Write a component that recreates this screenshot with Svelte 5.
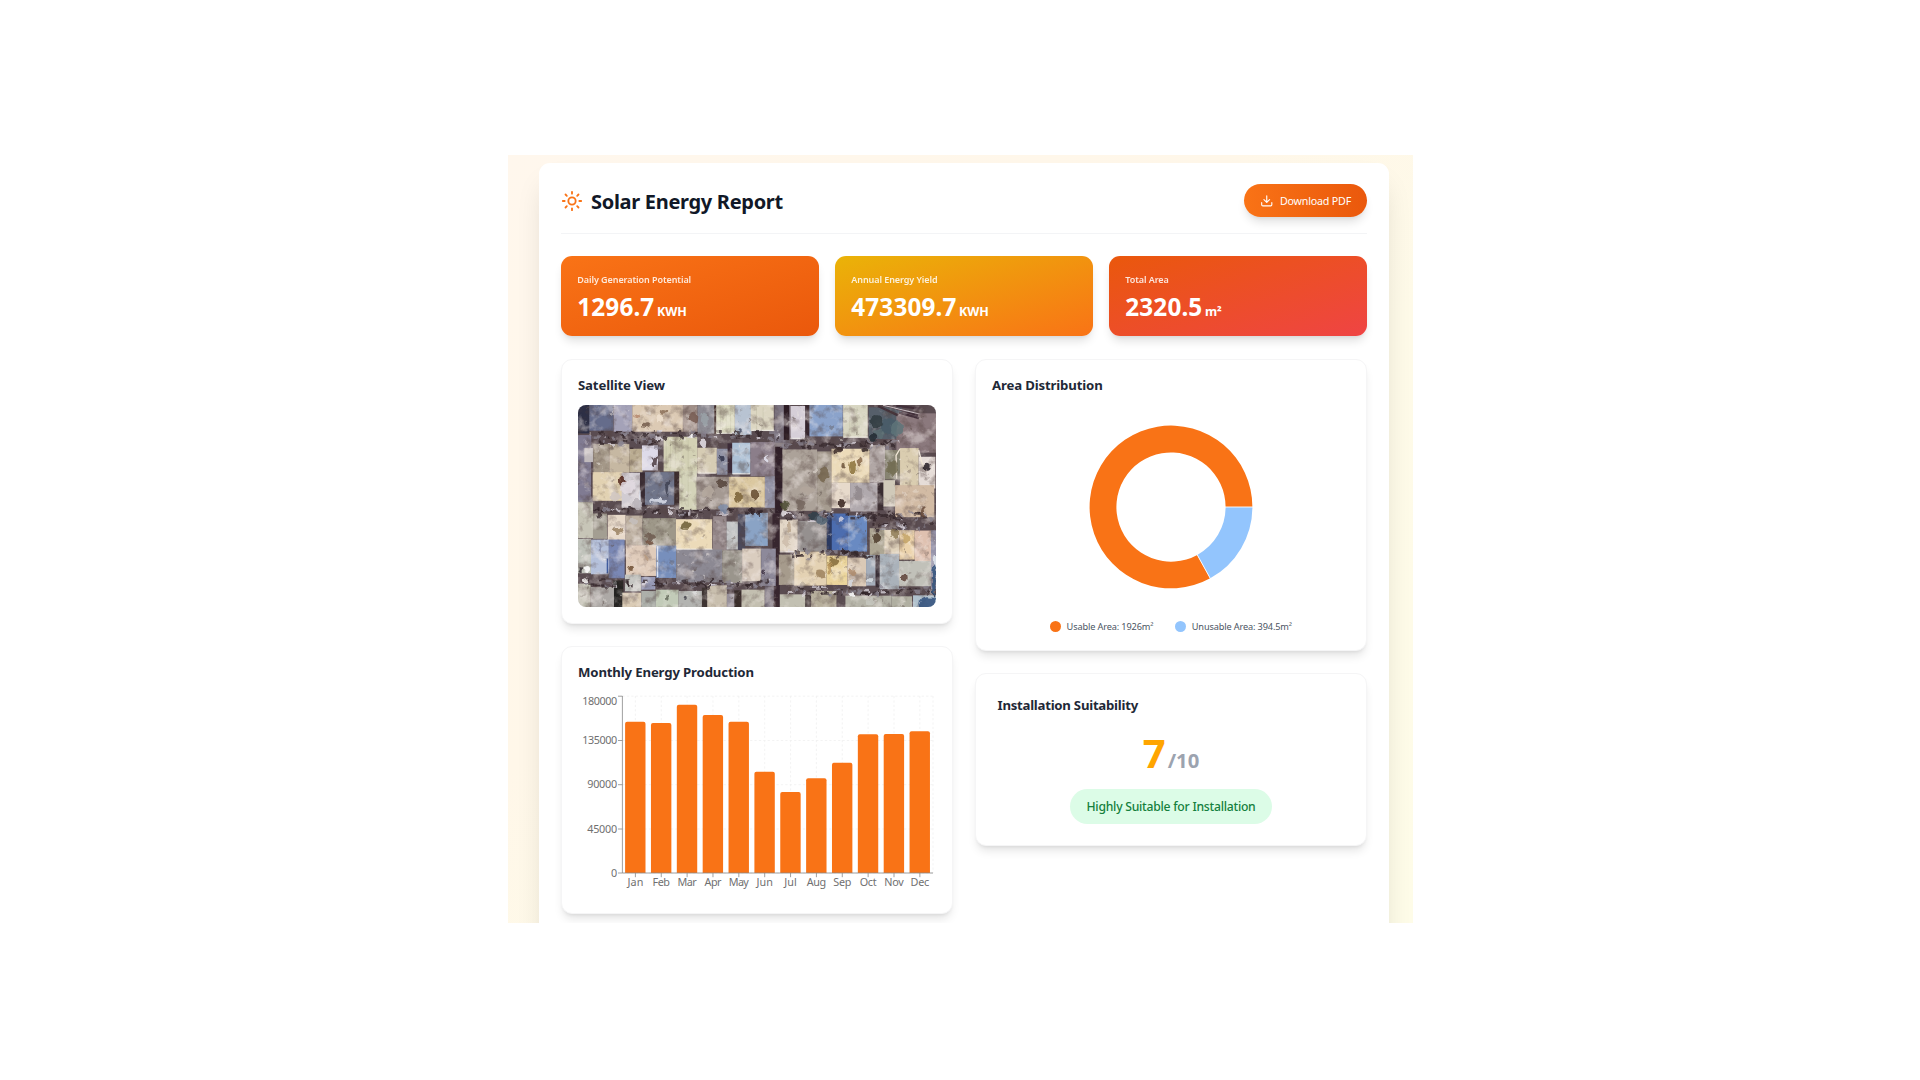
<script>
  const stats = [
    { label: 'Daily Generation Potential', value: '1296.7', unit: 'KWH', tone: 'daily' },
    { label: 'Annual Energy Yield', value: '473309.7', unit: 'KWH', tone: 'annual' },
    { label: 'Total Area', value: '2320.5', unit: 'm²', tone: 'area' }
  ];

  const months = [
    ['Jan', 151.3, 16], ['Feb', 150, 17.5], ['Mar', 168.3, 19], ['Apr', 158, 17],
    ['May', 151.3, 20], ['Jun', 101.3, 16.5], ['Jul', 81, 12.5], ['Aug', 94.7, 19.5],
    ['Sep', 110.3, 18], ['Oct', 138.7, 17], ['Nov', 139, 19.5], ['Dec', 141.7, 18.5]
  ];
  const step = 25.86;
  const ticks = [
    [180000, 4.9, 0.2, 35], [135000, 44.5, 44.5, 35], [90000, 88.8, 88.7, 30],
    [45000, 133, 133, 30], [0, 177.2, 177, 6]
  ];

  // Rooftops: x, y, width, height, fill
  const roofs = [
    [84,165,34,85,'#2d2f45'],[118,165,72,77,'#656c8b'],[191,165,56,80,'#a4a2b8'],[247,165,152,80,'#dccab4'],
    [399,165,44,80,'#a08f88'],[443,165,50,86,'#8d8b93'],[499,165,56,86,'#dfdec5'],[555,165,50,90,'#b8c3d2'],[603,165,69,78,'#dcd6c2'],
    [722,168,44,100,'#d6cfd8'],[779,165,100,94,'#8ba3cb'],[880,165,74,98,'#d8d6c2'],[957,172,100,95,'#565f6a'],
    [1040,190,119,118,'#8b797d'],
    [84,255,40,195,'#807b92'],[103,294,26,42,'#c1bbbd'],[130,282,48,86,'#a49888'],[178,282,60,86,'#c6b8a2'],[238,296,40,70,'#b9ab90'],[276,286,48,75,'#dedbe9'],
    [341,260,101,104,'#d3d1b4'],[388,362,53,117,'#d4d3b9'],[442,293,59,77,'#d6ccb4'],[501,296,32,78,'#8d8fa2'],
    [547,278,55,94,'#adc1d6'],[602,276,72,102,'#8b7e8a'],[645,378,30,95,'#9494a7'],
    [128,366,92,86,'#e2d2b2'],[215,368,55,105,'#d1ccd2'],[285,366,88,98,'#70758a'],[440,380,98,98,'#a49992'],[537,380,108,92,'#dbc8a0'],
    [698,298,104,184,'#aca299'],[802,304,43,180,'#a69c90'],[845,296,115,102,'#ecdbb9'],[845,398,56,76,'#e7dacb'],[901,398,82,86,'#b0a9ad'],
    [960,285,46,112,'#b1a7a5'],[1006,300,45,88,'#878472'],[1051,294,56,114,'#dacdb0'],[1107,320,50,95,'#e6ddd8'],[1001,390,35,79,'#d0c9b9'],[1036,405,118,96,'#d2bba4'],
    [84,456,45,108,'#c7c5b7'],[129,490,42,76,'#a39e92'],[173,494,54,76,'#e8daca'],[227,496,51,90,'#beb1a2'],[278,504,100,84,'#9e9889'],
    [378,507,109,90,'#ecdbb9'],[489,498,41,104,'#95888a'],[530,514,34,84,'#c3c5c6'],[586,488,68,99,'#8aa3c5'],
    [84,566,39,103,'#bfc2ba'],[123,568,54,104,'#b5c1db'],[176,568,48,116,'#7a88b5'],[228,585,94,92,'#e0ccbb'],
    [319,586,60,97,'#778fbc'],[379,598,138,98,'#8c8993'],[517,600,60,98,'#9a958c'],[577,595,56,98,'#dacdbf'],[634,595,44,112,'#8d899a'],
    [690,508,54,98,'#e2d6c6'],[744,512,87,92,'#95908f'],[831,488,16,110,'#2b3960'],[846,490,49,110,'#4c6daf'],[895,496,57,108,'#698ac2'],
    [960,534,47,80,'#aea794'],[1004,539,45,72,'#e1d3bc'],[1049,540,46,88,'#ecd3ab'],[1095,541,49,94,'#dfc1b0'],
    [687,613,46,91,'#a69b8c'],[733,604,97,102,'#e4d2b3'],[830,616,63,88,'#ebd59c'],[893,622,56,86,'#dac9b6'],[949,614,28,92,'#a5aebb'],
    [990,611,58,106,'#aab2ba'],[1048,632,96,76,'#c1c1b9'],[1144,540,15,176,'#9694aa'],
    [84,700,38,70,'#c1c0b3'],[122,710,70,60,'#ada9a6'],[225,673,48,50,'#c3c4c0'],[274,680,42,38,'#9699b5'],[217,727,57,43,'#dacbb5'],[274,722,44,48,'#adb0aa'],[318,718,68,52,'#c2cbb8'],[386,722,70,48,'#b3b4b1'],
    [472,705,59,65,'#c9bfae'],[531,730,22,40,'#968f99'],[575,718,69,52,'#c3bfb0'],[690,732,76,38,'#c2c0b2'],[784,722,76,48,'#b6ae9b'],[887,736,138,34,'#b5b4a8'],[1025,738,62,32,'#b0afa1'],[1090,735,69,35,'#b0c1cd']
  ];
  // Alleys and courtyard shade
  const alleys = [
    [674,165,46,118,'#7c7480'],[702,165,16,105,'#2c1c24'],[645,278,58,34,'#8f8589'],[676,290,22,200,'#302029'],[668,490,22,280,'#37262f'],[645,706,27,64,'#6b6370'],
    [765,165,14,98,'#34252d'],[484,168,15,84,'#3c2824'],[84,444,44,12,'#8e8b99'],[107,326,18,120,'#3d2a2e'],[270,367,18,102,'#382b33'],[371,363,17,102,'#3b2c2d'],
    [533,280,14,88,'#3c2b38'],[564,492,22,107,'#4c4b5d'],[978,616,12,95,'#392e36'],[984,392,18,88,'#392d31'],
    [190,690,30,80,'#252422'],[553,720,22,50,'#392d2b'],[456,712,16,58,'#3d3331'],[766,734,18,36,'#463a3a']
  ];
  // Stains and tanks: cx, cy, rx, ry, fill
  const marks = [
    [290,226,10,9,'#745d4c'],[342,184,12,7,'#8b7058'],[330,205,7,12,'#efe0cf'],[430,200,12,18,'#765a51'],[465,210,12,20,'#9aa2a8'],[262,198,12,8,'#b5886d'],
    [425,254,7,6,'#fff'],[460,280,9,12,'#e6e2e9'],[516,326,8,8,'#31344a'],[652,326,4,11,'#e4e4f1'],[568,243,5,5,'#4c5268'],[314,334,10,14,'#4c3c42'],
    [217,392,10,15,'#4c2017'],[234,410,24,20,'#e3dbe2'],[196,440,14,14,'#cfc6c2'],[352,412,6,22,'#3e4151'],[325,452,28,6,'#dcdfeb'],[262,462,12,16,'#b9b3b9'],
    [564,440,9,18,'#786036'],[614,434,11,17,'#61482c'],[517,402,16,12,'#534238'],[476,424,18,18,'#b6aaa0'],[522,474,14,12,'#8290ac'],
    [880,345,5,10,'#71583c'],[908,352,10,22,'#8a7139'],[931,332,7,14,'#886a4b'],[876,460,9,13,'#33201b'],[865,300,11,10,'#3e2e2c'],[944,300,9,9,'#362a2a'],
    [1131,350,9,12,'#231c24'],[1120,484,6,16,'#694b39'],[822,374,15,20,'#76664f'],[1028,354,16,24,'#716b50'],[705,466,12,12,'#4b4b31'],[752,464,12,16,'#74665e'],[926,430,12,24,'#90888c'],[770,420,20,12,'#b1a69b'],
    [408,526,17,10,'#6b5c34'],[300,560,15,12,'#6d5a4f'],[298,577,14,7,'#715040'],[205,542,16,9,'#9a8161'],[252,514,12,9,'#c5c0bd'],[242,654,10,8,'#6d4d34'],[287,622,6,9,'#b79a80'],
    [982,562,12,14,'#4d3c2c'],[1036,550,12,13,'#8e7b56'],[1070,565,12,15,'#c4a469'],[852,634,16,15,'#826a3a'],[813,670,17,15,'#9e825d'],[840,656,7,20,'#ba975d'],[908,665,12,9,'#af8d6f'],[1062,682,9,12,'#5e4238'],
    [980,215,18,20,'#303b40'],[1018,230,28,22,'#485c68'],[990,252,18,12,'#5b6d72'],[1042,236,18,22,'#5e7479'],[970,262,12,10,'#222b33'],
    [643,668,6,7,'#3e3142'],[718,530,8,15,'#baa68e'],[710,573,9,17,'#cdbcaa'],[700,490,9,9,'#e6e2e5'],[793,498,18,10,'#30404a'],[815,512,16,12,'#526473'],
    [112,656,8,9,'#fff'],[92,658,7,7,'#332d31'],[106,690,8,6,'#f8f6f3'],[905,735,8,7,'#fff'],[902,696,8,9,'#d5d8de'],[960,690,8,8,'#d9e0e6'],[960,755,12,9,'#c7c8c0'],
    [1135,760,26,22,'#304f7b'],[1154,690,7,48,'#34557e'],[1158,635,6,22,'#e0e8ef'],[352,742,4,9,'#64695b'],[406,744,4,5,'#44434b'],[436,728,6,5,'#ddd'],[150,590,4,14,'#8a91ae']
  ];

  // Repeatable scatter of small debris over the rooftops
  let seed = 41;
  const rnd = () => {
    seed = (seed * 16807) % 2147483647;
    return seed / 2147483647;
  };
  const specks = Array.from({ length: 320 }, () => {
    const x = 84 + rnd() * 1075;
    const y = 165 + rnd() * 605;
    const dark = rnd() > 0.5;
    return [x, y, 1.5 + rnd() * 5, 1.5 + rnd() * 4, dark ? '#5d4f4a' : '#f2ece6', 0.15 + rnd() * 0.35];
  });
  const lanes = [[130,480,250],[490,680,252],[130,320,276],[690,1050,280],[130,660,480],[690,1159,493],[700,960,607],[84,660,695],[690,1159,718],[960,1150,525]];
  const debris = lanes.flatMap(([a, b, y]) =>
    Array.from({ length: Math.round((b - a) / 9) }, () => {
      const tone = rnd();
      return [a + rnd() * (b - a), y + (rnd() - 0.5) * 22, 5 + rnd() * 14, 4 + rnd() * 8,
        tone > 0.82 ? '#e0dbe3' : tone > 0.5 ? '#8a8490' : '#33262a', 0.75];
    })
  );
</script>

<main class="page">
  <div class="report">
    <header>
      <div class="brand">
        <svg class="sun" viewBox="0 0 24 24">
          <circle cx="12" cy="12" r="4" />
          <path d="M12 2v2M12 20v2M4.93 4.93l1.41 1.41M17.66 17.66l1.41 1.41M2 12h2M20 12h2M6.34 17.66l-1.41 1.41M19.07 4.93l-1.41 1.41" />
        </svg>
        <h1>Solar Energy Report</h1>
      </div>
      <button>
        <svg viewBox="0 0 24 24"><path d="M21 15v4a2 2 0 0 1-2 2H5a2 2 0 0 1-2-2v-4M7 10l5 5 5-5M12 15V3" /></svg>
        <span>Download PDF</span>
      </button>
    </header>

    <section class="stats">
      {#each stats as s}
        <article class="stat {s.tone}">
          <p class="label">{s.label}</p>
          <p class="value">{s.value}<span class="unit">{s.unit}</span></p>
        </article>
      {/each}
    </section>

    <section class="columns">
      <div class="column">
        <article class="card satellite">
          <h2>Satellite View</h2>
          <svg class="photo" viewBox="84 165 1075 605" preserveAspectRatio="none">
            <defs>
              <filter id="soft" x="0" y="0" width="1" height="1" color-interpolation-filters="sRGB">
                <feGaussianBlur stdDeviation="1.3" />
              </filter>
              <filter id="rough" x="0" y="0" width="1" height="1" color-interpolation-filters="sRGB">
                <feTurbulence type="fractalNoise" baseFrequency="0.06" numOctaves="1" seed="9" result="n" />
                <feDisplacementMap in="SourceGraphic" in2="n" scale="22" xChannelSelector="R" yChannelSelector="G" />
                <feGaussianBlur stdDeviation="1.7" />
              </filter>
              <filter id="grime" x="0" y="0" width="1" height="1" color-interpolation-filters="sRGB">
                <feTurbulence type="fractalNoise" baseFrequency="0.03" numOctaves="4" seed="7" />
                <feColorMatrix values="0 0 0 0 0.32  0 0 0 0 0.25  0 0 0 0 0.24  3.4 0 0 0 -1.7" />
              </filter>
              <filter id="glare" x="0" y="0" width="1" height="1" color-interpolation-filters="sRGB">
                <feTurbulence type="fractalNoise" baseFrequency="0.025" numOctaves="4" seed="22" />
                <feColorMatrix values="0 0 0 0 0.98  0 0 0 0 0.95  0 0 0 0 0.94  0 3.6 0 0 -1.8" />
              </filter>
            </defs>
            <g filter="url(#soft)">
              <rect x="84" y="165" width="1075" height="605" fill="#5a4c51" />
              {#each alleys as [x, y, w, h, c]}<rect {x} {y} width={w} height={h} fill={c} />{/each}
              {#each roofs as [x, y, w, h, c]}<rect {x} {y} width={w} height={h} fill={c} />{/each}
              <path d="M985 168l60 28M1010 166l95 30M1030 166l80 10M1048 188l60 16" stroke="#42303a" stroke-width="7" />
              <path d="M1000 166l110 26" stroke="#c9bfc4" stroke-width="3" />
              <path d="M323 588v92M160 628h12v38M270 420v50" fill="none" stroke="#dbe5f5" stroke-width="4" />
              <path d="M172 625v45" stroke="#3b579b" stroke-width="4" />
              <path d="M1051 296l-12 20 2 70M1107 300l10 40 14 25" fill="none" stroke="#f2e8d8" stroke-width="4" />
              <path d="M349 268v86M362 268v86M376 268v86M396 270v195M415 270v200M512 170v76M529 170v76M542 170v76M620 172v65M640 172v65M900 172v80M922 172v80" stroke="#aaa88c" stroke-opacity=".35" stroke-width="2" />
              <path d="M500 250h52M605 241h66M722 265h44M882 261h72M445 369h54M548 371h52M380 597h108M690 605h52" stroke="#f1eeea" stroke-opacity=".7" stroke-width="4" />
            </g>
            <rect x="84" y="165" width="1075" height="605" filter="url(#grime)" opacity=".42" />
            <rect x="84" y="165" width="1075" height="605" filter="url(#glare)" opacity=".42" />
            <g filter="url(#rough)">
              <rect x="84" y="165" width="1075" height="605" fill="none" />
              {#each specks as [x, y, a, b, c, o]}<ellipse cx={x} cy={y} rx={a} ry={b} fill={c} opacity={o} />{/each}
              {#each debris as [x, y, w, h, c, o]}<rect {x} {y} width={w} height={h} fill={c} opacity={o} />{/each}
              {#each marks as [x, y, a, b, c]}<ellipse cx={x} cy={y} rx={a} ry={b} fill={c} opacity=".85" />{/each}
            </g>
          </svg>
        </article>

        <article class="card monthly">
          <h2>Monthly Energy Production</h2>
          <svg class="bars" viewBox="0 0 358 200">
            <g class="grid">
              {#each ticks as [v, ly, y]}<path d="M44.5 {y}H355" />{/each}
              {#each months as m, i}<path d="M{57.4 + i * step} 0V177" />{/each}
              <path d="M355 0V177" />
            </g>
            {#each months as [name, h], i}
              <path class="bar" d="M{47.1 + i * step} 177v{-(h - 2)}q0 -2 2 -2h16.4q2 0 2 2v{h - 2}z" />
            {/each}
            <g class="axis">
              <path d="M44.4 0V177H355" />
              {#each ticks as [v, ly, y]}<path d="M40 {y}h4.4" />{/each}
              {#each months as m, i}<path d="M{57.4 + i * step} 177v4.2" />{/each}
            </g>
            {#each ticks as [v, ly, y, w]}
              <text x="39.2" y={ly + 3.6} text-anchor="end" textLength={w}>{v}</text>
            {/each}
            {#each months as [name, h, w], i}
              <text x={57.4 + i * step} y="190.3" text-anchor="middle" textLength={w}>{name}</text>
            {/each}
          </svg>
        </article>
      </div>

      <div class="column">
        <article class="card area-card">
          <h2>Area Distribution</h2>
          <svg class="donut" viewBox="-82 -82 164 164">
            <path fill="#f97316" d="M81.4 0A81.4 81.4 0 1 0 39.2 71.3L26.3 47.9A54.6 54.6 0 1 1 54.6 0Z" />
            <path fill="#93c5fd" d="M81.4 0A81.4 81.4 0 0 1 39.2 71.3L26.3 47.9A54.6 54.6 0 0 0 54.6 0Z" />
            <path stroke="#fff" stroke-width=".9" d="M54 0H82M26 47.4L39.6 72" />
          </svg>
          <div class="legend">
            <div class="key"><i class="usable"></i><span>Usable Area: 1926m²</span></div>
            <div class="key"><i class="unusable"></i><span>Unusable Area: 394.5m²</span></div>
          </div>
        </article>

        <article class="card suit">
          <h2>Installation Suitability</h2>
          <p class="score">7<span>/10</span></p>
          <p class="pill"><span>Highly Suitable for Installation</span></p>
        </article>
      </div>
    </section>
  </div>
</main>

<style>
  :global(body) { background: #fff; overflow: hidden; }
  * { box-sizing: border-box; }
  h1, h2, p { margin: 0; }
  .page {
    width: 904.5px; height: 768px; margin: 155px 0 0 508px; padding: 7.5px 24px 0 31px;
    overflow: hidden; background: linear-gradient(to bottom right, #fff7ed, #fff7e9 40%, #fefae8 60%, #fefce8);
    font-family: 'Segoe UI', 'Noto Sans', 'Open Sans', sans-serif; color: #1f2937;
  }
  .report {
    height: 900px; width: 850px; padding: 21.5px 22px; background: #fff; border-radius: 11px;
    box-shadow: 0 17px 30px -9px rgba(0, 0, 0, .17);
  }
  header {
    display: flex; justify-content: space-between; align-items: flex-start;
    height: 50px; border-bottom: 1px solid #f3f4f6;
  }
  .brand { display: flex; align-items: center; gap: 8px; height: 33px; }
  svg { display: block; flex: none; }
  .sun { width: 22px; height: 22px; fill: none; stroke: #f97316; stroke-width: 2; stroke-linecap: round; }
  h1 { font-size: 20px; line-height: 28px; font-weight: 700; color: #111827; letter-spacing: -.3px; white-space: nowrap; padding-top: 2px; }
  button {
    display: flex; align-items: center; justify-content: center; gap: 6.5px; width: 123px; height: 33px; padding: 0;
    border: 0; border-radius: 17px; color: #fff; font: 400 10.7px/16px 'Segoe UI', 'Noto Sans', sans-serif; letter-spacing: -.2px;
    background: linear-gradient(to right, #f97316, #ea580c); white-space: nowrap;
    box-shadow: 0 7px 10px -2px rgba(0, 0, 0, .12), 0 3px 4px -3px rgba(0, 0, 0, .1);
  }
  button svg { width: 13.5px; height: 13.5px; fill: none; stroke: #fff; stroke-width: 2; stroke-linecap: round; stroke-linejoin: round; }
  .stats { display: grid; grid-template-columns: repeat(3, 1fr); gap: 16px; margin-top: 22px; }
  .stat {
    height: 80px; padding: 15.5px 16.3px; border-radius: 11px; color: #fff; white-space: nowrap;
    box-shadow: 0 7px 10px -2px rgba(0, 0, 0, .12), 0 3px 4px -3px rgba(0, 0, 0, .1);
  }
  .daily { background: linear-gradient(to bottom right, #f97316, #ea580c); }
  .annual { background: linear-gradient(to bottom right, #eab308, #f97316); }
  .area { background: linear-gradient(to bottom right, #ea580c, #ef4444); }
  .label { font-size: 9px; line-height: 15px; font-weight: 600; opacity: .85; letter-spacing: -.07px; }
  .value { font-size: 24.3px; line-height: 30px; font-weight: 700; letter-spacing: .13px; margin-top: 5px; }
  .unit { font-size: 12.5px; margin-left: 2.5px; letter-spacing: 0; }
  .columns { display: grid; grid-template-columns: 392px 392px; gap: 22px; margin-top: 22.5px; align-items: start; }
  .column { display: flex; flex-direction: column; gap: 21.5px; }
  .card {
    padding: 16px; background: #fff; border: 1px solid #f5f5f6; border-radius: 11px;
    box-shadow: 0 7px 10px -2px rgba(0, 0, 0, .1), 0 3px 4px -3px rgba(0, 0, 0, .12);
  }
  h2 { font-size: 13.2px; line-height: 18.5px; font-weight: 700; white-space: nowrap; letter-spacing: -.15px; }
  .satellite { height: 265.5px; }
  .photo { width: 358px; height: 202px; margin-top: 11px; border-radius: 8px; }
  .monthly { height: 268px; }
  .bars { width: 358px; height: 200px; margin-top: 14.5px; overflow: visible; }
  .bar { fill: #f97316; }
  .grid path { fill: none; stroke: #f0f0f0; stroke-width: .8; stroke-dasharray: 2.2 2.2; }
  .axis path { fill: none; stroke: #888; stroke-width: .8; }
  text { font-size: 10.8px; fill: #707070; }
  .area-card { height: 292.5px; }
  .donut { width: 164px; height: 164px; margin: 31px auto 0; }
  .legend { display: flex; justify-content: center; gap: 22px; margin-top: 30px; font-size: 9.2px; line-height: 15px; letter-spacing: -.14px; color: #4b5563; white-space: nowrap; }
  .key { display: flex; align-items: center; gap: 5.5px; }
  .key i { width: 11px; height: 11px; border-radius: 50%; }
  .usable { background: #f97316; }
  .unusable { background: #93c5fd; }
  .suit { height: 173px; padding: 22px 21.5px; }
  .suit h2 { letter-spacing: -.25px; line-height: 19px; }
  .score { display: flex; justify-content: center; align-items: baseline; gap: 2px; margin-top: 16.5px; font-size: 40px; line-height: 44px; font-weight: 700; color: #ffa500; }
  .score span { font-size: 20.3px; line-height: 24px; color: #9ca3af; letter-spacing: 0; }
  .pill {
    display: flex; align-items: center; justify-content: center; width: 202px; height: 35.5px; margin: 13.5px auto 0;
    border-radius: 18px; background: #dcfce7; color: #15803d; font-size: 12.2px; font-weight: 500; white-space: nowrap; letter-spacing: -.25px;
  }
</style>
